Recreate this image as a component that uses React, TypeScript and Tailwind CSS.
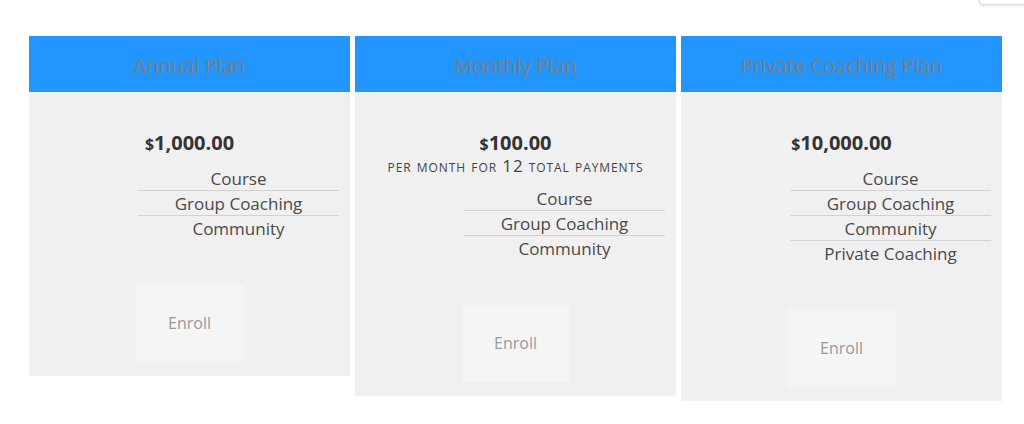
const plans = [
  {
    title: 'Annual Plan',
    price: '1,000.00',
    note: null as string | null,
    features: ['Course', 'Group Coaching', 'Community'],
  },
  {
    title: 'Monthly Plan',
    price: '100.00',
    note: 'per month for 12 total payments',
    features: ['Course', 'Group Coaching', 'Community'],
  },
  {
    title: 'Private Coaching Plan',
    price: '10,000.00',
    note: null,
    features: ['Course', 'Group Coaching', 'Community', 'Private Coaching'],
  },
];

export default function App() {
  return (
    <div
      className="relative w-[1024px] h-[424px] bg-white overflow-hidden"
      style={{ fontFamily: '"Open Sans", "Noto Sans", sans-serif' }}
    >
      {/* Clipped widget at top right */}
      <div className="absolute right-[-4px] top-[-30px] w-[49px] h-[35px] bg-white border border-[#dcdcdc] rounded-sm shadow-[0_1px_3px_rgba(0,0,0,0.12)]" />

      <div className="flex items-start gap-[5px] pl-[29px] pt-[36px]">
        {plans.map((plan) => (
          <div key={plan.title} className="w-[321px] flex flex-col bg-[#f0f0f0]">
            <div className="h-[56px] bg-[#2395ff] flex items-center justify-center pt-[4px]">
              <h2 className="text-[20px] font-normal text-[#7d7d7d] leading-none">{plan.title}</h2>
            </div>

            <div className="flex flex-col items-center pt-[39px] pb-[15px]">
              <p className="text-[20px] font-bold text-[#333] leading-[24px]">
                <span className="text-[16px]">$</span>
                {plan.price}
              </p>
              {plan.note && (
                <p className="text-[17px] text-[#444] leading-[20px] tracking-[0.9px] [font-variant:small-caps]">
                  {plan.note}
                </p>
              )}

              <ul className="self-end mr-[11px] w-[201px] mt-[10px]">
                {plan.features.map((f, i) => (
                  <li
                    key={f}
                    className={`text-center text-[17px] text-[#4a4a4a] leading-[24px] pt-[1px] ${
                      i < plan.features.length - 1 ? 'h-[25px] border-b border-[#d2d2d2]' : 'h-[24px]'
                    }`}
                  >
                    {f}
                  </li>
                ))}
              </ul>

              <button className="mt-[45px] w-[108px] h-[76px] bg-[#f4f5f5] text-[16px] text-[#999]">
                Enroll
              </button>
            </div>
          </div>
        ))}
      </div>
    </div>
  );
}
